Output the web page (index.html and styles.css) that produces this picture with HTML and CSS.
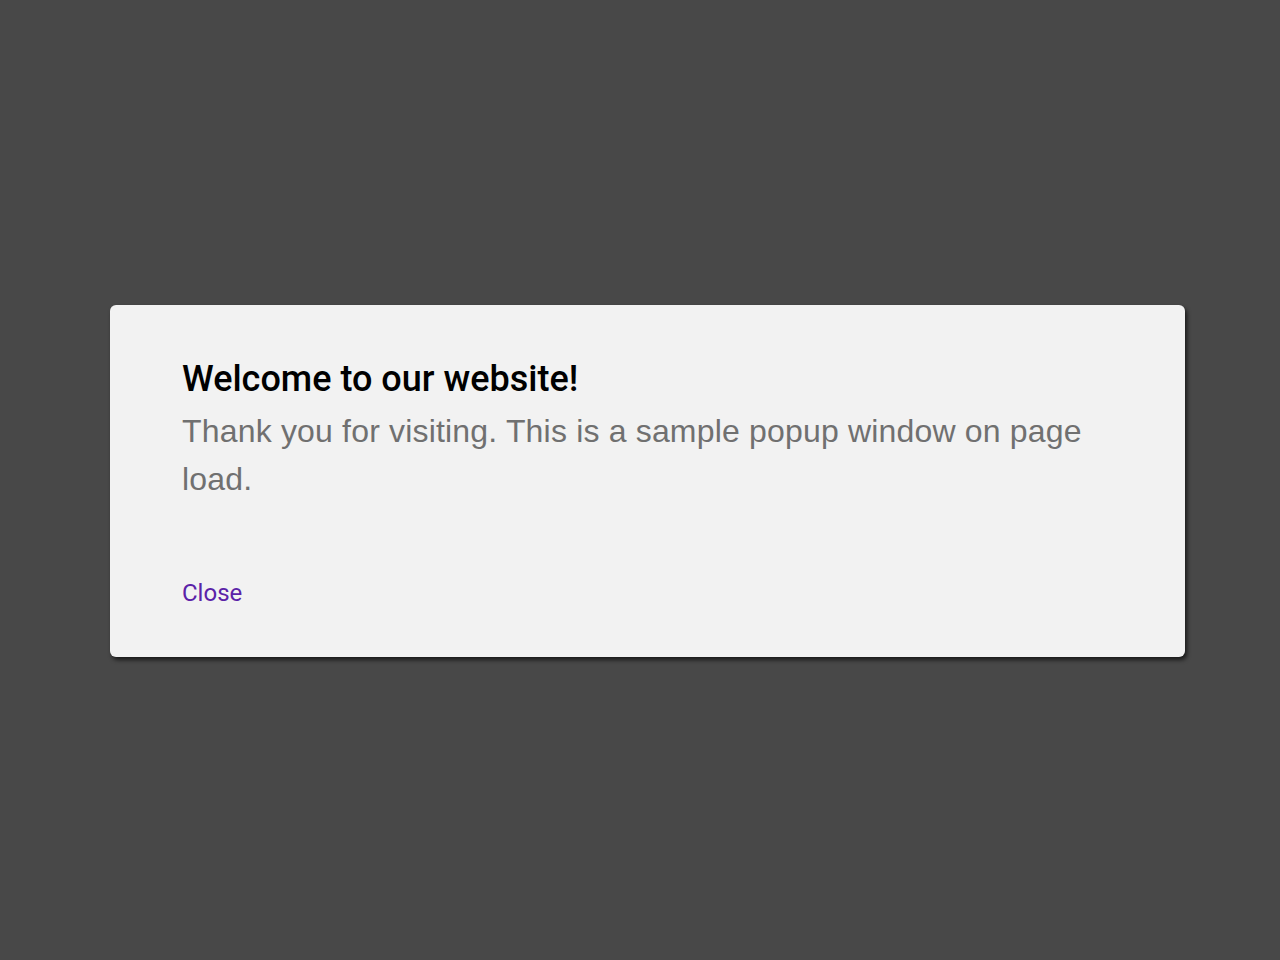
FILE: index.html
```html
<!DOCTYPE html>
<html lang="en">
<head>
  <meta charset="UTF-8">
  <meta name="viewport" content="width=device-width, initial-scale=1.0">
  <title>Popup on Page Load</title>
  <link rel="stylesheet" href="styles.css">
</head>
<body>

  <!-- Popup Window -->
  <div class="popup" id="popup">
    <h2 class="popup-title">Welcome to our website!</h2>
    <p class="popup-text">Thank you for visiting. This is a sample popup window on page load.</p>
    <a href="#" class="popup-close">Close</a>
  </div>

</body>
</html>
```

FILE: styles.css
```css
/* CSS Styles */

* {
  box-sizing: border-box;
  margin: 0;
  padding: 0;
}

body {
  display: flex;
  align-items: center;
  height: 100vh;
  padding: 2px 0 0 110px;
  background: #484848;
  font-family: Roboto, Arial, sans-serif;
}

.popup {
  width: 1075px;
  height: 352px;
  padding: 53px 72px 0;
  background: #f2f2f2;
  border-radius: 6px;
  box-shadow: 2px 3px 4px rgba(0, 0, 0, 0.65);
}

.popup-title {
  font-size: 36px;
  font-weight: 500;
  line-height: 42px;
  color: #000;
}

.popup-text {
  margin-top: 7px;
  font-family: "Liberation Sans", Arial, sans-serif;
  font-size: 32px;
  font-weight: 400;
  line-height: 48px;
  letter-spacing: 0.18px;
  color: #707070;
}

.popup-close {
  display: inline-block;
  margin-top: 76px;
  font-size: 24px;
  color: #5b22a8;
  text-decoration: none;
}
```
